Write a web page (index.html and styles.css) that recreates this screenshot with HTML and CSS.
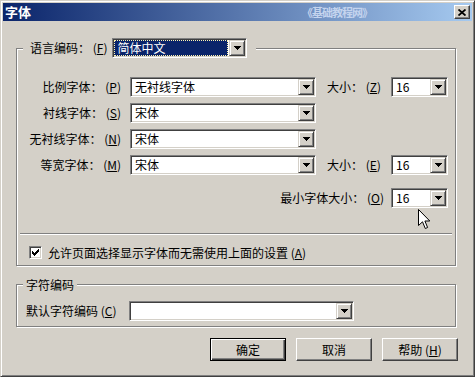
FILE: index.html
```html
<!DOCTYPE html>
<html lang="zh-CN">
<head>
<meta charset="utf-8">
<title>字体</title>
<link rel="stylesheet" href="styles.css">
</head>
<body>
<div class="window">
  <div class="titlebar">
    <span class="title">字体</span>
    <span class="watermark">《基础教程网》</span>
    <span class="close"><svg width="8" height="7" viewBox="0 0 8 7"><path d="M0.5 0.5 L7.5 6.5 M7.5 0.5 L0.5 6.5" stroke="#000" stroke-width="1.8" fill="none"/></svg></span>
  </div>
  <div class="content">
    <fieldset class="group group-lang">
      <legend class="legend-lang">
        <span class="lbl-lang">语言编码： (<u>F</u>)</span>
        <span class="select select-lang"><span class="value selected">简体中文</span><span class="drop"><svg width="7" height="4" viewBox="0 0 7 4" shape-rendering="crispEdges"><path d="M0 0h7v1h-7zM1 1h5v1h-5zM2 2h3v1h-3zM3 3h1v1h-1z" fill="#000"/></svg></span></span>
      </legend>
      <div class="font-grid">
        <span class="lbl">比例字体： (<u>P</u>)</span>
        <span class="select sel-font"><span class="value">无衬线字体</span><span class="drop"><svg width="7" height="4" viewBox="0 0 7 4" shape-rendering="crispEdges"><path d="M0 0h7v1h-7zM1 1h5v1h-5zM2 2h3v1h-3zM3 3h1v1h-1z" fill="#000"/></svg></span></span>
        <span class="lbl-size">大小： (<u>Z</u>)</span>
        <span class="select sel-size"><span class="value">16</span><span class="drop"><svg width="7" height="4" viewBox="0 0 7 4" shape-rendering="crispEdges"><path d="M0 0h7v1h-7zM1 1h5v1h-5zM2 2h3v1h-3zM3 3h1v1h-1z" fill="#000"/></svg></span></span>

        <span class="lbl">衬线字体： (<u>S</u>)</span>
        <span class="select sel-font"><span class="value">宋体</span><span class="drop"><svg width="7" height="4" viewBox="0 0 7 4" shape-rendering="crispEdges"><path d="M0 0h7v1h-7zM1 1h5v1h-5zM2 2h3v1h-3zM3 3h1v1h-1z" fill="#000"/></svg></span></span>
        <span class="empty"></span>
        <span class="empty"></span>

        <span class="lbl">无衬线字体： (<u>N</u>)</span>
        <span class="select sel-font"><span class="value">宋体</span><span class="drop"><svg width="7" height="4" viewBox="0 0 7 4" shape-rendering="crispEdges"><path d="M0 0h7v1h-7zM1 1h5v1h-5zM2 2h3v1h-3zM3 3h1v1h-1z" fill="#000"/></svg></span></span>
        <span class="empty"></span>
        <span class="empty"></span>

        <span class="lbl">等宽字体： (<u>M</u>)</span>
        <span class="select sel-font"><span class="value">宋体</span><span class="drop"><svg width="7" height="4" viewBox="0 0 7 4" shape-rendering="crispEdges"><path d="M0 0h7v1h-7zM1 1h5v1h-5zM2 2h3v1h-3zM3 3h1v1h-1z" fill="#000"/></svg></span></span>
        <span class="lbl-size">大小： (<u>E</u>)</span>
        <span class="select sel-size"><span class="value">16</span><span class="drop"><svg width="7" height="4" viewBox="0 0 7 4" shape-rendering="crispEdges"><path d="M0 0h7v1h-7zM1 1h5v1h-5zM2 2h3v1h-3zM3 3h1v1h-1z" fill="#000"/></svg></span></span>

        <span class="lbl lbl-min">最小字体大小： (<u>O</u>)</span>
        <span class="select sel-size sel-min"><span class="value">16</span><span class="drop"><svg width="7" height="4" viewBox="0 0 7 4" shape-rendering="crispEdges"><path d="M0 0h7v1h-7zM1 1h5v1h-5zM2 2h3v1h-3zM3 3h1v1h-1z" fill="#000"/></svg></span></span>
      </div>
      <div class="separator"></div>
      <div class="check-row">
        <span class="checkbox"><svg width="9" height="9" viewBox="0 0 9 9" shape-rendering="crispEdges"><path d="M1 3h1v3h-1zM2 4h1v3h-1zM3 5h1v3h-1zM4 4h1v3h-1zM5 3h1v3h-1zM6 2h1v3h-1zM7 1h1v3h-1z" fill="#000"/></svg></span>
        <span class="check-text">允许页面选择显示字体而无需使用上面的设置 (<u>A</u>)</span>
      </div>
    </fieldset>

    <fieldset class="group group-charset">
      <legend class="legend-charset">字符编码</legend>
      <div class="charset-row">
        <span class="lbl-charset">默认字符编码 (<u>C</u>)</span>
        <span class="select sel-charset"><span class="value"></span><span class="drop"><svg width="7" height="4" viewBox="0 0 7 4" shape-rendering="crispEdges"><path d="M0 0h7v1h-7zM1 1h5v1h-5zM2 2h3v1h-3zM3 3h1v1h-1z" fill="#000"/></svg></span></span>
      </div>
    </fieldset>

    <div class="buttons">
      <span class="btn btn-default">确定</span>
      <span class="btn">取消</span>
      <span class="btn">帮助 (<u>H</u>)</span>
    </div>
  </div>
  <svg class="cursor" width="13" height="21" viewBox="0 0 13 21"><path d="M0.5 0.5 L0.5 16.5 L4.5 12.8 L7.3 19.5 L9.6 18.5 L6.9 12 L11.8 12 Z" fill="#fff" stroke="#000" stroke-width="1" stroke-linejoin="miter"/></svg>
</div>
</body>
</html>
```

FILE: styles.css
```css
* { box-sizing: border-box; }
html, body { margin: 0; padding: 0; background: #d4d0c8; }
body {
  font-family: "Noto Sans CJK SC", "Noto Sans", sans-serif;
  font-size: 12px;
  line-height: 14px;
  color: #000;
}
u { text-decoration: underline; text-underline-offset: 1px; }

.window {
  position: relative;
  width: 475px;
  height: 377px;
  background: #d4d0c8;
  border: 1px solid;
  border-color: #d4d0c8 #404040 #404040 #d4d0c8;
  box-shadow: inset 1px 1px #fff, inset -1px -1px #808080;
  padding: 2px;
  display: flex;
  flex-direction: column;
}

.titlebar {
  height: 18px;
  flex: none;
  display: flex;
  align-items: center;
  background: linear-gradient(to right, #0a246a, #a6caf0);
  padding: 0 2px 0 2px;
}
.title { color: #fff; font-weight: bold; font-size: 13px; line-height: 14px; }
.watermark {
  margin-left: auto;
  margin-right: 82px;
  color: #c4d4ee;
  font-weight: bold;
  font-size: 11px;
  line-height: 14px;
  letter-spacing: -1px;
}
.close {
  width: 16px;
  height: 14px;
  border: 1px solid;
  border-color: #fff #404040 #404040 #fff;
  box-shadow: inset -1px -1px #808080;
  background: #d4d0c8;
  display: flex;
  align-items: center;
  justify-content: center;
}
.close svg { display: block; }

.content {
  flex: 1;
  padding: 0 16px 0 13px;
  display: flex;
  flex-direction: column;
}

.group {
  margin: 0;
  min-width: 0;
  border: 1px solid #808080;
  box-shadow: inset 1px 1px #fff, 1px 1px #fff;
}
.group-lang { margin-top: 17px; padding: 0 3px 6px 3px; }
.group-charset { margin-top: 11px; padding: 0 3px 5px 9px; }

.legend-lang {
  margin-left: 3px;
  padding: 0 9px 0 7px;
  display: flex;
  align-items: center;
  gap: 5px;
  background: #d4d0c8;
}
.legend-charset {
  margin-left: -3px;
  padding: 0 3px;
  line-height: 15px;
  background: #d4d0c8;
}

.select {
  height: 20px;
  display: flex;
  background: #fff;
  border: 1px solid;
  border-color: #808080 #fff #fff #808080;
  box-shadow: inset 1px 1px #404040, inset -1px -1px #d4d0c8;
  padding: 1px;
}
.select .value {
  flex: 1;
  min-width: 0;
  padding-left: 3px;
  line-height: 16px;
  white-space: nowrap;
}
.select .value.selected {
  margin-right: 1px;
  background: #0a246a;
  color: #fff;
  outline: 1px dotted #fff4b0;
  outline-offset: -1px;
}
.drop {
  flex: none;
  width: 16px;
  height: 16px;
  border: 1px solid;
  border-color: #d4d0c8 #404040 #404040 #d4d0c8;
  box-shadow: inset 1px 1px #fff, inset -1px -1px #808080;
  background: #d4d0c8;
  display: flex;
  align-items: center;
  justify-content: center;
}
.drop svg { display: block; }

.select-lang { width: 135px; }

.font-grid {
  margin-top: 19px;
  display: grid;
  grid-template-columns: 110px 197px 64px 57px;
  grid-template-rows: 20px 20px 20px 20px 27px;
  row-gap: 6px;
  align-items: center;
}
.lbl { text-align: right; padding-right: 9px; white-space: nowrap; }
.lbl-size { white-space: nowrap; }
.sel-font { width: 186px; }
.sel-size { width: 57px; }
.lbl-min { grid-column: 1 / 4; padding-right: 7px; margin-top: 7px; }
.sel-min { margin-top: 7px; }

.separator {
  margin-top: 25px;
  height: 2px;
  border-top: 1px solid #808080;
  border-bottom: 1px solid #fff;
}

.check-row {
  margin-top: 11px;
  height: 13px;
  display: flex;
  align-items: center;
  gap: 6px;
  padding-left: 9px;
}
.checkbox {
  flex: none;
  width: 13px;
  height: 13px;
  background: #fff;
  border: 1px solid;
  border-color: #808080 #fff #fff #808080;
  box-shadow: inset 1px 1px #404040, inset -1px -1px #d4d0c8;
  padding: 1px;
}
.checkbox svg { display: block; }
.check-text { white-space: nowrap; }

.charset-row {
  margin-top: 9px;
  display: flex;
  align-items: center;
}
.lbl-charset { width: 103px; white-space: nowrap; }
.sel-charset { width: 225px; }

.buttons {
  margin-top: 11px;
  margin-right: -2px;
  display: flex;
  justify-content: flex-end;
  gap: 10px;
}
.btn {
  width: 76px;
  height: 23px;
  display: flex;
  align-items: center;
  justify-content: center;
  background: #d4d0c8;
  border: 1px solid;
  border-color: #fff #404040 #404040 #fff;
  box-shadow: inset -1px -1px #808080;
  white-space: nowrap;
}
.btn-default {
  border-color: #000;
  box-shadow: inset 1px 1px #fff, inset -1px -1px #404040, inset -2px -2px #808080;
}

.cursor {
  position: absolute;
  left: 417px;
  top: 208px;
}
```
